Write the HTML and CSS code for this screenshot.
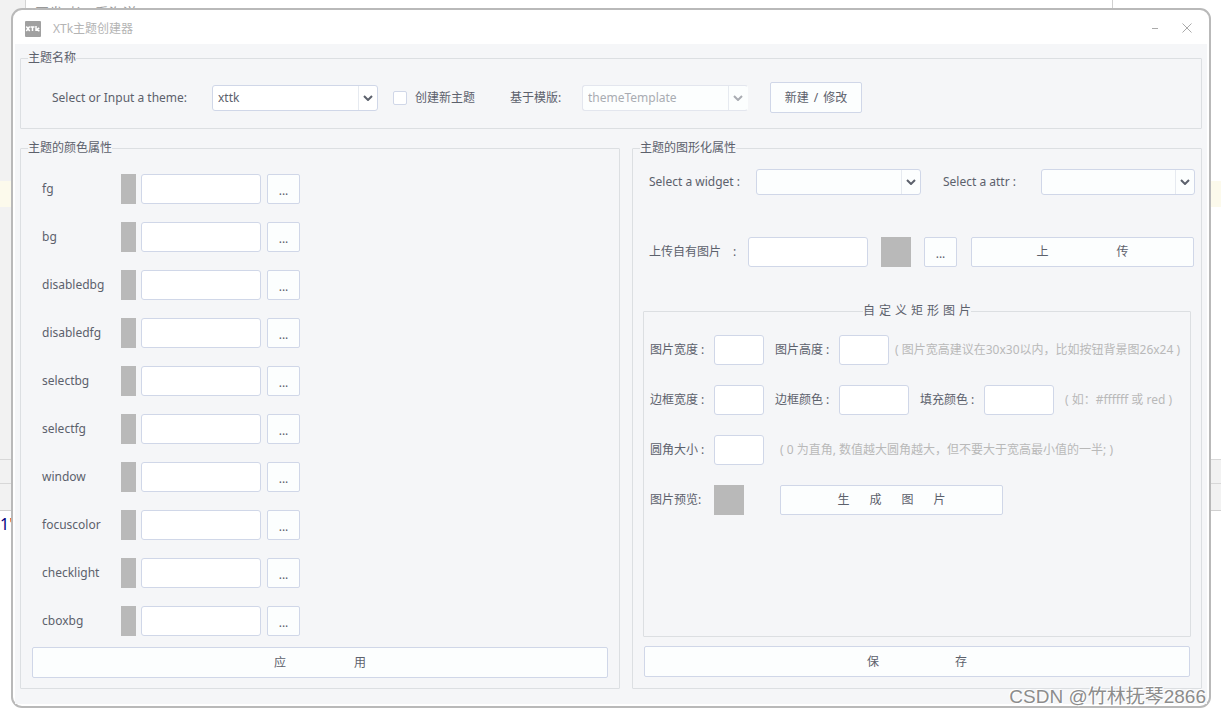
FILE: index.html
```html
<!DOCTYPE html>
<html lang="zh-CN">
<head>
<meta charset="utf-8">
<title>XTk主题创建器</title>
<link rel="stylesheet" href="styles.css">
</head>
<body>
<div class="editor" aria-hidden="true">
  <div class="tabs"><span class="tab-text">开发 者、看海洋</span></div>
  <div class="current-line"></div>
  <div class="code"></div>
  <div class="bar bar-a"></div>
  <div class="bar bar-b"></div>
  <div class="console"><span class="num">1</span><span class="str">'</span></div>
</div>

<div class="window">
  <header class="titlebar">
    <svg class="logo" viewBox="0 0 16 16" aria-hidden="true">
      <rect width="16" height="16" rx="1" fill="#a0a0a0"/>
      <path d="M1.3 5.5 4.7 10M4.7 5.5 1.3 10M5.5 6.1h4M7.5 6.1V10M11 5v5M14.2 7 11.6 8.6 14.4 10" stroke="#fff" stroke-width="1.5" fill="none"/>
    </svg>
    <h1 class="title">XTk主题创建器</h1>
    <button class="win-btn" type="button" aria-label="最小化"><svg viewBox="0 0 12 12"><path d="M3 6.5h6" stroke="#aaa" fill="none"/></svg></button>
    <button class="win-btn" type="button" aria-label="关闭"><svg viewBox="0 0 12 12"><path d="M1.5 1.5l9 9M10.5 1.5l-9 9" stroke="#aaa" fill="none"/></svg></button>
  </header>

  <form class="content">
    <fieldset class="group theme">
      <legend>主题名称</legend>
      <div class="theme-row">
        <label class="theme-label" for="theme">Select or Input a theme:</label>
        <span class="combo theme-combo"><select id="theme"><option>xttk</option></select><span class="arrow"><svg viewBox="0 0 10 6"><path d="M1 1l4 4 4-4"/></svg></span></span>
        <label class="check"><input type="checkbox">创建新主题</label>
        <label class="template-label" for="template">基于模版:</label>
        <span class="combo theme-combo combo-off"><select id="template" disabled><option>themeTemplate</option></select><span class="arrow"><svg viewBox="0 0 10 6"><path d="M1 1l4 4 4-4"/></svg></span></span>
        <button class="btn create" type="button"><span>新建</span><span>/</span><span>修改</span></button>
      </div>
    </fieldset>

    <div class="columns">
      <fieldset class="group colors">
        <legend>主题的颜色属性</legend>
        <div class="colors-body">
          <div class="color-rows">
            <div class="color-row"><label for="c0">fg</label><span class="swatch"></span><input id="c0" type="text"><button class="btn pick" type="button">...</button></div>
            <div class="color-row"><label for="c1">bg</label><span class="swatch"></span><input id="c1" type="text"><button class="btn pick" type="button">...</button></div>
            <div class="color-row"><label for="c2">disabledbg</label><span class="swatch"></span><input id="c2" type="text"><button class="btn pick" type="button">...</button></div>
            <div class="color-row"><label for="c3">disabledfg</label><span class="swatch"></span><input id="c3" type="text"><button class="btn pick" type="button">...</button></div>
            <div class="color-row"><label for="c4">selectbg</label><span class="swatch"></span><input id="c4" type="text"><button class="btn pick" type="button">...</button></div>
            <div class="color-row"><label for="c5">selectfg</label><span class="swatch"></span><input id="c5" type="text"><button class="btn pick" type="button">...</button></div>
            <div class="color-row"><label for="c6">window</label><span class="swatch"></span><input id="c6" type="text"><button class="btn pick" type="button">...</button></div>
            <div class="color-row"><label for="c7">focuscolor</label><span class="swatch"></span><input id="c7" type="text"><button class="btn pick" type="button">...</button></div>
            <div class="color-row"><label for="c8">checklight</label><span class="swatch"></span><input id="c8" type="text"><button class="btn pick" type="button">...</button></div>
            <div class="color-row"><label for="c9">cboxbg</label><span class="swatch"></span><input id="c9" type="text"><button class="btn pick" type="button">...</button></div>
          </div>
          <button class="btn wide" type="button"><span>应</span><span>用</span></button>
        </div>
      </fieldset>

      <fieldset class="group graphics">
        <legend>主题的图形化属性</legend>
        <div class="graphics-body">
          <div class="widget-row">
            <label class="widget-label" for="widget">Select a widget :</label>
            <span class="combo widget-combo"><select id="widget"><option></option></select><span class="arrow"><svg viewBox="0 0 10 6"><path d="M1 1l4 4 4-4"/></svg></span></span>
            <label class="attr-label" for="attr">Select a attr :</label>
            <span class="combo attr-combo"><select id="attr"><option></option></select><span class="arrow"><svg viewBox="0 0 10 6"><path d="M1 1l4 4 4-4"/></svg></span></span>
          </div>
          <div class="upload-row">
            <label class="upload-label" for="upload"><span>上传自有图片</span><span>:</span></label>
            <input id="upload" class="upload-path" type="text">
            <span class="swatch"></span>
            <button class="btn pick" type="button">...</button>
            <button class="btn wide upload" type="button"><span>上</span><span>传</span></button>
          </div>
          <fieldset class="group custom">
            <legend><span>自</span><span>定</span><span>义</span><span>矩</span><span>形</span><span>图</span><span>片</span></legend>
            <div class="custom-rows">
              <div class="custom-row">
                <label for="w">图片宽度 :</label><input id="w" class="short" type="text">
                <label for="h">图片高度 :</label><input id="h" class="short" type="text">
                <span class="hint hint-near">( 图片宽高建议在30x30以内，比如按钮背景图26x24 )</span>
              </div>
              <div class="custom-row">
                <label for="bw">边框宽度 :</label><input id="bw" class="short" type="text">
                <label for="bc">边框颜色 :</label><input id="bc" class="medium" type="text">
                <label for="fc">填充颜色 :</label><input id="fc" class="medium" type="text">
                <span class="hint">( 如：#ffffff 或 red )</span>
              </div>
              <div class="custom-row">
                <label for="r">圆角大小 :</label><input id="r" class="short" type="text">
                <span class="hint hint-far">( 0 为直角, 数值越大圆角越大，但不要大于宽高最小值的一半; )</span>
              </div>
              <div class="custom-row">
                <span class="name">图片预览:</span><span class="swatch"></span>
                <button class="btn generate" type="button"><span>生</span><span>成</span><span>图</span><span>片</span></button>
              </div>
            </div>
          </fieldset>
          <button class="btn wide save" type="button"><span>保</span><span>存</span></button>
        </div>
      </fieldset>
    </div>
  </form>
</div>
<div class="watermark">CSDN @竹林抚琴2866</div>
</body>
</html>
```
FILE: styles.css
```css
* { box-sizing: border-box; }

body {
  margin: 0;
  min-height: 100vh;
  position: relative;
  display: flex;
  padding: 8px 10px 8px 11px;
  background: #fff;
  color: #5c616c;
  font: 12px/16px "Noto Sans", "Noto Sans CJK SC", sans-serif;
}

/* Editor behind the dialog */
.editor {
  position: absolute;
  inset: 0;
  display: grid;
  grid-template-rows: 181px 26px 252px 24px 28px 1fr;
  overflow: hidden;
}
.tabs {
  margin-right: 108px;
  padding: 3px 0 0 10px;
  border-left: 25px solid #f2f2f2;
  border-right: 1px solid #d0d0d0;
  box-shadow: inset 1px 0 #d4d4d4;
}
.tab-text { color: #999; font-size: 14px; line-height: 20px; }
.current-line { background: #fcfaec; }
.code { border-left: 25px solid #f2f2f2; }
.bar { background: #f2f2f2; border-top: 1px solid #d8d8d8; }
.bar-b { border-bottom: 1px solid #d0d0d0; }
.console { padding-top: 3px; font: 16px/20px "Noto Sans", sans-serif; color: #00007f; }
.console .str { color: #c33; }

/* Dialog */
.window {
  position: relative;
  flex: 1;
  display: flex;
  flex-direction: column;
  padding: 0 2px 2px;
  border: 2px solid #b9b9b9;
  border-radius: 11px;
  background: #fff;
}
.titlebar { display: flex; align-items: center; height: 34px; padding: 4px 14px 0 10px; }
.logo { width: 16px; height: 16px; margin-right: 12px; }
.title { flex: 1; margin: 0; font-size: 12px; font-weight: 400; color: #b4b4b4; }
.win-btn {
  display: flex;
  width: 12px;
  height: 12px;
  margin: 0 0 2px 20px;
  padding: 0;
  border: 0;
  background: none;
}
.content {
  flex: 1;
  display: flex;
  flex-direction: column;
  gap: 11px;
  padding: 6px 5px 15px;
  background: #f5f6f8;
}

.group { margin: 0; min-width: 0; border: 1px solid #dcdfe2; border-radius: 1px; }
.group > legend { padding: 0; margin: 0; line-height: 16px; }

.btn, input[type="text"], select {
  font: inherit;
  color: inherit;
  border: 1px solid #d0d7e8;
  border-radius: 3px;
}
input[type="text"] { background: #fff; height: 30px; padding: 0 5px; min-width: 0; }
.btn {
  display: flex;
  align-items: center;
  justify-content: center;
  height: 30px;
  padding: 0;
  background: #fcfefe;
  border-radius: 2px;
}
.pick { width: 33px; padding-top: 3px; }
.swatch { background: #b9b9b9; width: 30px; height: 30px; }
.wide { width: 100%; height: 31px; gap: 68px; }

.combo { position: relative; display: flex; }
.combo select {
  appearance: none;
  width: 100%;
  height: 26px;
  padding: 0 24px 0 5px;
  background: #fcfefe;
  opacity: 1;
}
.arrow {
  position: absolute;
  top: 1px;
  right: 1px;
  bottom: 1px;
  width: 19px;
  display: flex;
  align-items: center;
  justify-content: center;
  border-left: 1px solid #e6eaf0;
  pointer-events: none;
}
.arrow svg { width: 10px; height: 6px; fill: none; stroke: #5c616c; stroke-width: 2; }
.combo-off select { color: #a9acb2; border-color: #e3e6ee; border-right-color: transparent; }
.combo-off .arrow svg { stroke: #a9acb2; }

/* Theme name */
.theme { padding: 16px 7px 15px; }
.theme-row { display: flex; align-items: center; padding: 0 24px; }
.theme-label { width: 160px; }
.theme-combo { width: 166px; }
.theme-combo #theme { background: #fff; }
.check { display: flex; align-items: center; gap: 8px; margin-left: 15px; width: 117px; }
.check input {
  appearance: none;
  width: 14px;
  height: 14px;
  margin: 0;
  border: 1px solid #d0d7e8;
  border-radius: 2px;
  background: #fff;
}
.template-label { width: 72px; }
.create { width: 92px; height: 31px; margin-left: 22px; gap: 5px; }

.columns { flex: 1; display: grid; grid-template-columns: 600fr 570fr; gap: 12px; }

/* Colour attributes */
.colors { padding: 18px 7px 10px; }
.colors-body { padding: 0 4px; }
.color-rows { display: grid; gap: 18px; margin-bottom: 11px; }
.color-row { display: flex; align-items: center; padding-left: 10px; }
.color-row label { width: 79px; }
.color-row .swatch { width: 15px; margin-right: 5px; }
.color-row input { width: 120px; margin-right: 6px; }

/* Graphic attributes */
.graphics { padding: 13px 7px 11px; }
.graphics-body { display: flex; flex-direction: column; height: 100%; padding: 0 3px; }
.widget-row { display: flex; align-items: center; margin: 0 -4px 42px 6px; }
.widget-label { width: 107px; }
.widget-combo { width: 165px; margin-right: 22px; }
.attr-label { width: 98px; }
.attr-combo { flex: 1; }
.upload-row { display: flex; align-items: center; margin: 0 -3px 36px 6px; }
.upload-label { display: flex; gap: 12px; width: 99px; }
.upload-path { width: 120px; }
.upload-row .swatch { margin: 0 13px; }
.upload { flex: 1; height: 30px; margin-left: 14px; }

.custom { flex: 1; padding: 16px 6px; }
.custom > legend { display: flex; gap: 4px; margin: 0 auto; }
.custom-rows { display: grid; gap: 20px; }
.custom-row { display: flex; align-items: center; white-space: nowrap; }
.custom-row label, .custom-row .name { width: 64px; }
.short { width: 50px; margin-right: 11px; }
.medium { width: 70px; margin-right: 11px; }
.hint { color: #b9b9b9; }
.hint-near { margin-left: -5px; }
.hint-far { margin-left: 5px; }
.generate { width: 223px; margin-left: 36px; gap: 20px; }
.save { width: auto; margin: 9px 1px 0; gap: 76px; }

.watermark {
  position: absolute;
  right: 15px;
  bottom: 6px;
  font: 19px/26px "Liberation Sans", "Noto Sans CJK SC", sans-serif;
  color: #8c8c8c;
  text-shadow: 1px 1px #fff, -1px -1px #fff;
}
```
